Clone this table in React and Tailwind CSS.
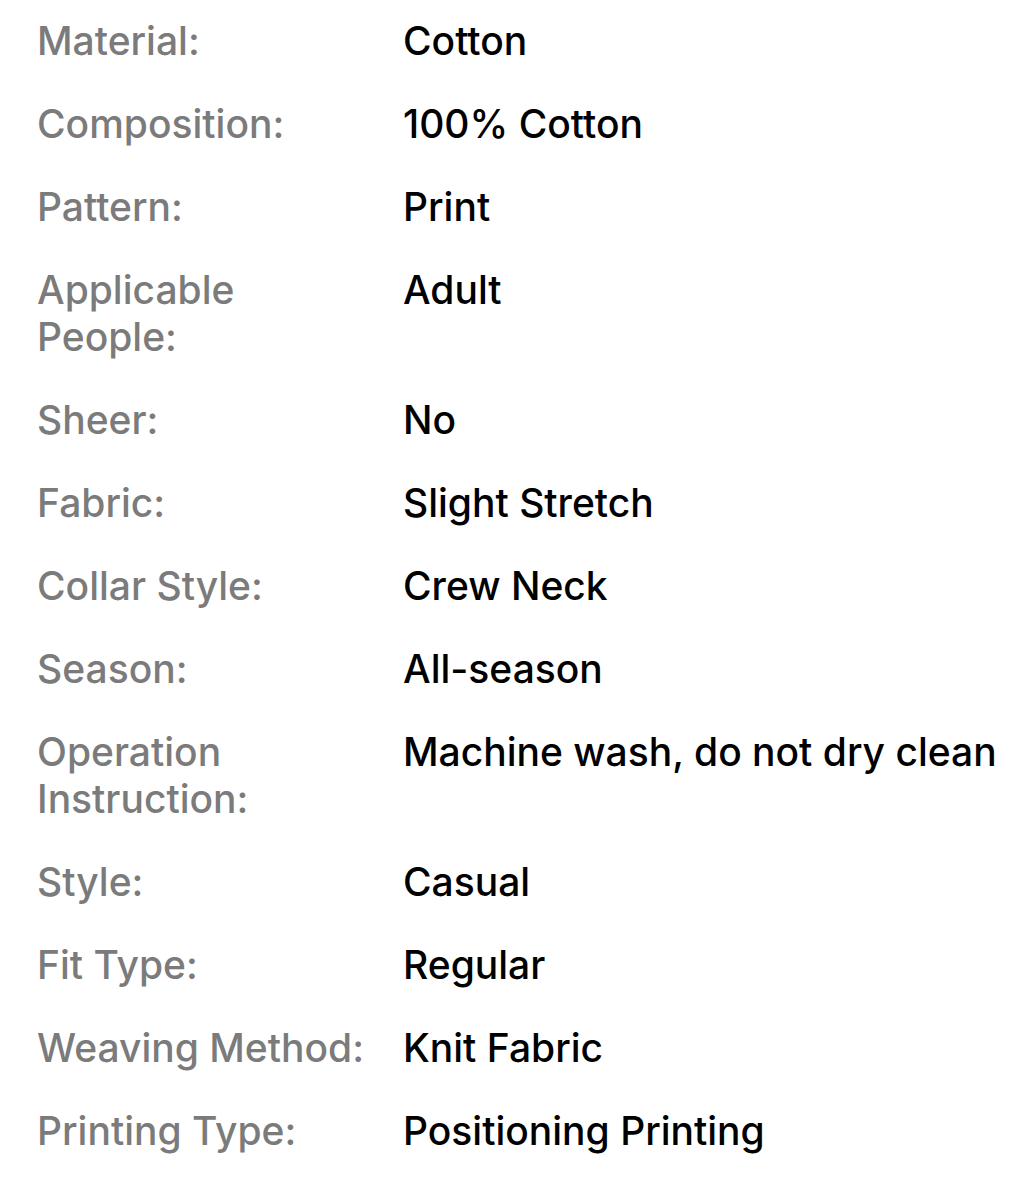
const rows = [
  ['Material:', 'Cotton'],
  ['Composition:', '100% Cotton'],
  ['Pattern:', 'Print'],
  ['Applicable People:', 'Adult'],
  ['Sheer:', 'No'],
  ['Fabric:', 'Slight Stretch'],
  ['Collar Style:', 'Crew Neck'],
  ['Season:', 'All-season'],
  ['Operation Instruction:', 'Machine wash, do not dry clean'],
  ['Style:', 'Casual'],
  ['Fit Type:', 'Regular'],
  ['Weaving Method:', 'Knit Fabric'],
  ['Printing Type:', 'Positioning Printing'],
];

export default function App() {
  return (
    <main className="min-h-screen bg-white pl-[37px] pt-[17px] font-['Inter',sans-serif] text-[39px] leading-[47px] font-medium">
      <dl className="grid grid-cols-[366px_1fr] gap-y-[36px]">
        {rows.map(([label, value]) => (
          <div key={label} className="contents">
            <dt className="pr-[30px] text-[#7b7b7b]">{label}</dt>
            <dd className="whitespace-nowrap text-black">{value}</dd>
          </div>
        ))}
      </dl>
    </main>
  );
}
